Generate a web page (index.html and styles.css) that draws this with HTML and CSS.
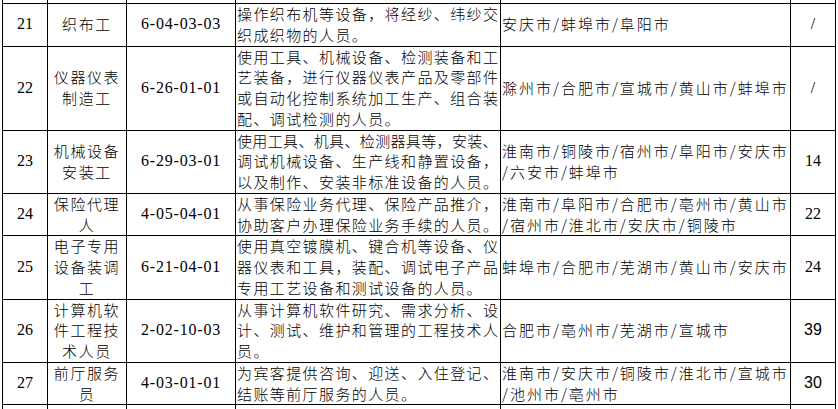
FILE: index.html
```html
<!DOCTYPE html>
<html lang="zh-CN">
<head>
<meta charset="utf-8">
<title>职业目录</title>
<link rel="stylesheet" href="styles.css">
</head>
<body>
<div class="sheet">
<table class="grid">
<colgroup>
<col class="c-no"><col class="c-name"><col class="c-code"><col class="c-desc"><col class="c-city"><col class="c-num">
</colgroup>
<tbody>
<tr class="spacer"><td></td><td></td><td></td><td></td><td></td><td></td></tr>
<tr>
<td class="no">21</td>
<td class="name">织布工</td>
<td class="code">6-04-03-03</td>
<td class="desc">操作织布机等设备，将经纱、纬纱交<br>织成织物的人员。</td>
<td class="city">安庆市/蚌埠市/阜阳市</td>
<td class="num">/</td>
</tr>
<tr>
<td class="no">22</td>
<td class="name">仪器仪表<br>制造工</td>
<td class="code">6-26-01-01</td>
<td class="desc">使用工具、机械设备、检测装备和工<br>艺装备，进行仪器仪表产品及零部件<br>或自动化控制系统加工生产、组合装<br>配、调试检测的人员。</td>
<td class="city">滁州市/合肥市/宣城市/黄山市/蚌埠市</td>
<td class="num">/</td>
</tr>
<tr>
<td class="no">23</td>
<td class="name">机械设备<br>安装工</td>
<td class="code">6-29-03-01</td>
<td class="desc"><span class="tight">使用工具、机具、检测器具等，安装、</span><br>调试机械设备、生产线和静置设备，<br>以及制作、安装非标准设备的人员。</td>
<td class="city">淮南市/铜陵市/宿州市/阜阳市/安庆市<br>/六安市/蚌埠市</td>
<td class="num">14</td>
</tr>
<tr>
<td class="no">24</td>
<td class="name">保险代理<br>人</td>
<td class="code">4-05-04-01</td>
<td class="desc">从事保险业务代理、保险产品推介，<br>协助客户办理保险业务手续的人员。</td>
<td class="city">淮南市/阜阳市/合肥市/亳州市/黄山市<br>/宿州市/淮北市/安庆市/铜陵市</td>
<td class="num">22</td>
</tr>
<tr>
<td class="no">25</td>
<td class="name">电子专用<br>设备装调<br>工</td>
<td class="code">6-21-04-01</td>
<td class="desc">使用真空镀膜机、键合机等设备、仪<br>器仪表和工具，装配、调试电子产品<br>专用工艺设备和测试设备的人员。</td>
<td class="city">蚌埠市/合肥市/芜湖市/黄山市/安庆市</td>
<td class="num">24</td>
</tr>
<tr>
<td class="no">26</td>
<td class="name">计算机软<br>件工程技<br>术人员</td>
<td class="code">2-02-10-03</td>
<td class="desc">从事计算机软件研究、需求分析、设<br>计、测试、维护和管理的工程技术人<br>员。</td>
<td class="city">合肥市/亳州市/芜湖市/宣城市</td>
<td class="num sans">39</td>
</tr>
<tr>
<td class="no">27</td>
<td class="name">前厅服务<br>员</td>
<td class="code">4-03-01-01</td>
<td class="desc">为宾客提供咨询、迎送、入住登记、<br>结账等前厅服务的人员。</td>
<td class="city">淮南市/安庆市/铜陵市/淮北市/宣城市<br>/池州市/亳州市</td>
<td class="num sans">30</td>
</tr>
<tr class="spacer"><td></td><td></td><td></td><td></td><td></td><td></td></tr>
</tbody>
</table>
</div>
</body>
</html>
```

FILE: styles.css
```css
html, body {
  margin: 0;
  padding: 0;
  background: #ffffff;
}
.sheet {
  width: 838px;
  height: 409px;
  overflow: hidden;
  padding-left: 2px;
  box-sizing: border-box;
}
.grid {
  border-collapse: collapse;
  table-layout: fixed;
  width: 833px;
  margin-top: -18px;
  color: #000;
  font-family: "Noto Sans CJK SC", "Noto Sans", sans-serif;
  font-weight: 300;
  font-size: 15px;
  line-height: 20.75px;
}
.c-no { width: 45px; }
.c-name { width: 79px; }
.c-code { width: 109px; }
.c-desc { width: 265px; }
.c-city { width: 290px; }
.c-num { width: 45px; }
.grid td {
  border: 1px solid #000;
  padding: 0;
  vertical-align: middle;
  white-space: nowrap;
  overflow: hidden;
}
.spacer td {
  height: 20px;
}
.no, .code, .num {
  text-align: center;
  font-family: "Liberation Serif", "DejaVu Serif", serif;
  font-weight: 400;
  font-size: 16px;
}
.code {
  letter-spacing: 0.8px;
}
.num.sans {
  font-family: "Liberation Sans", Arial, sans-serif;
}
.name {
  text-align: center;
  letter-spacing: 1.6px;
  padding-left: 1px;
}
.desc {
  letter-spacing: 1.4px;
  padding-left: 1px !important;
}
.tight {
  letter-spacing: 0.35px;
}
.city {
  letter-spacing: 2px;
  padding-left: 1px !important;
}
```
